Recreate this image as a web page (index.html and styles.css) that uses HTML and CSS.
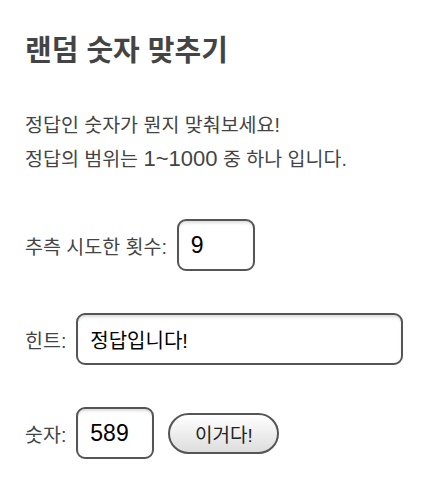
FILE: index.html
```html
<!DOCTYPE html>
<html lang="ko">
<head>
  <meta charset="UTF-8">
  <title>랜덤 숫자 맞추기</title>
  <link rel="stylesheet" href="styles.css">
</head>
<body>
  <div class="game">
    <h1>랜덤 숫자 맞추기</h1>
    <div class="intro">
      <p>정답인 숫자가 뭔지 맞춰보세요!</p>
      <p>정답의 범위는 <span class="num">1~1000</span> 중 하나 입니다.</p>
    </div>
    <div class="row">
      <label for="tries">추측 시도한 횟수:</label>
      <input type="text" id="tries" class="field field-short" value="9" readonly>
    </div>
    <div class="row">
      <label for="hint">힌트:</label>
      <input type="text" id="hint" class="field field-long" value="정답입니다!" readonly>
    </div>
    <div class="row">
      <label for="guess">숫자:</label>
      <input type="text" id="guess" class="field field-short" value="589">
      <button class="btn" id="guessBtn">이거다!</button>
    </div>
  </div>
</body>
</html>
```

FILE: styles.css
```css
body {
  margin: 0;
  background: #fff;
  font-family: "Liberation Sans", "Noto Sans CJK KR", sans-serif;
  color: #444;
}
.game {
  padding: 33px 25px 0 25px;
}
.game h1 {
  margin: 0 0 40px 0;
  font-size: 29px;
  line-height: 36px;
  font-weight: bold;
  color: #444;
}
.intro p {
  margin: 0;
  font-size: 19.5px;
  line-height: 33px;
}
.intro .num {
  font-size: 22px;
}
.intro {
  margin-bottom: 43px;
}
.row {
  display: flex;
  align-items: center;
  gap: 10px;
  margin-bottom: 42px;
  font-size: 19.5px;
}
.field {
  box-sizing: border-box;
  height: 52px;
  padding: 0 12px;
  border: 2px solid #555;
  border-radius: 9px;
  box-shadow: inset 0 3px 3px -1px #ddd;
  font-family: "Liberation Sans", "Noto Sans CJK KR", sans-serif;
  font-size: 20px;
  color: #000;
  outline: none;
}
.field-short {
  width: 78px;
  font-size: 23px;
}
.field-long {
  width: 327px;
}
.btn {
  box-sizing: border-box;
  width: 111px;
  height: 41px;
  margin-left: 4px;
  border: 2px solid #555;
  border-radius: 21px;
  background: linear-gradient(to bottom, #fff, #ddd);
  font-family: "Liberation Sans", "Noto Sans CJK KR", sans-serif;
  font-size: 19px;
  color: #222;
  cursor: pointer;
}
```
